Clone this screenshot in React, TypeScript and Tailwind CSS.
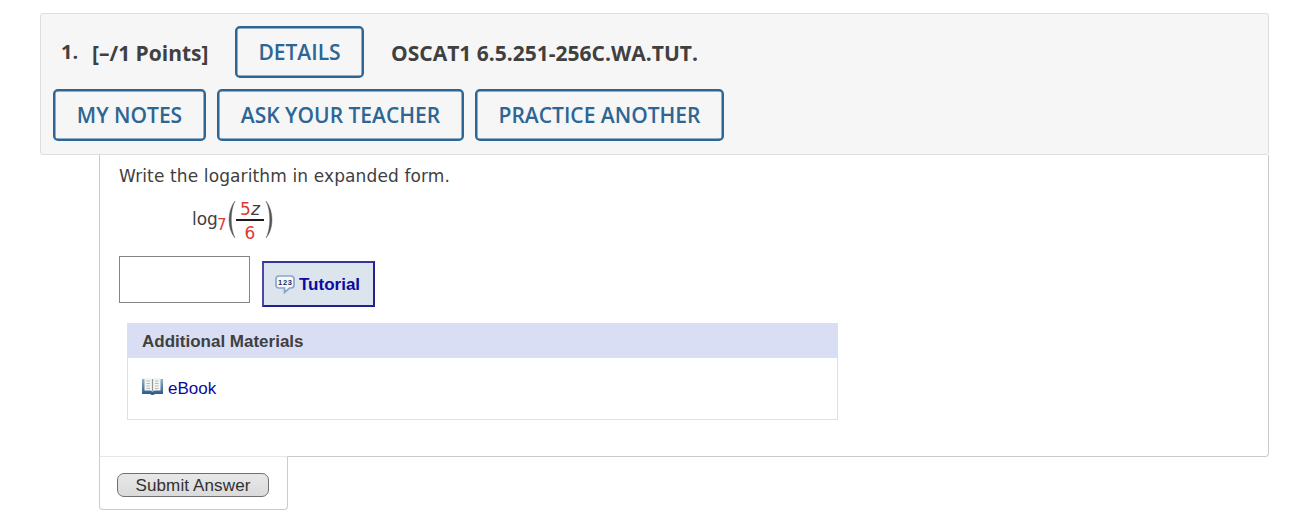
import type { ReactNode } from 'react';

export default function App() {
  return (
    <div className="h-[529px] w-[1290px] overflow-hidden bg-white pl-10 pt-[13px] text-[#404040]">
      <QuestionHeader />
      <div className="ml-[59px] h-[302px] w-[1170px] rounded-br-[4px] border border-t-0 border-[#c9c9c9] pl-[19px] pt-[9px]">
        <p className="h-6 whitespace-nowrap font-['DejaVu_Sans'] text-[17px] leading-6 tracking-[0.12px]">
          Write the logarithm in expanded form.
        </p>
        <Expression />
        <div className="flex">
          <input aria-label="Answer" className="h-[47px] w-[131px] border border-[#858585] bg-white px-2 outline-none" />
          <button className="ml-3 mt-[5px] flex h-[46px] w-[113px] items-center border-2 border-[#22228f] border-l-[#4a4aa5] border-t-[#35359b] bg-[#dce4ed] pl-[11px] font-['Liberation_Sans'] text-[17px] font-bold text-[#0b0ba0]">
            <TutorialIcon />
            <span className="ml-1 pt-0.5">Tutorial</span>
          </button>
        </div>
        <Materials />
      </div>
      <div className="-mt-px ml-[59px] h-[54px] w-[189px] rounded-b-[4px] border border-[#cbcbcb] border-t-[#e7e7e7] bg-white pl-[17px] pt-4">
        <button className="block h-6 w-[152px] rounded-[7px] border border-[#707070] bg-linear-to-b from-[#e8e8e8] to-[#dadada] pt-px font-['Liberation_Sans'] text-[17px] leading-[22px] tracking-[0.13px] text-[#303030]">
          Submit Answer
        </button>
      </div>
    </div>
  );
}

function QuestionHeader() {
  return (
    <div className="h-[142px] w-[1229px] rounded-[3px] border border-[#dedede] bg-[#f6f6f6] pl-3 pt-3 font-['Open_Sans']">
      <div className="flex h-[52px] items-center whitespace-nowrap text-[21px] font-bold">
        <span className="ml-2 w-[31px] text-[20px]">1.</span>
        <span className="w-[143px] pt-[3px]">[–/1 Points]</span>
        <HeaderButton width="w-[129px]">DETAILS</HeaderButton>
        <span className="ml-[27px] pt-[3px]">OSCAT1 6.5.251-256C.WA.TUT.</span>
      </div>
      <div className="mt-[11px] flex gap-[11px]">
        <HeaderButton width="w-[153px]">MY NOTES</HeaderButton>
        <HeaderButton width="w-[247px]">ASK YOUR TEACHER</HeaderButton>
        <HeaderButton width="w-[249px]">PRACTICE ANOTHER</HeaderButton>
      </div>
    </div>
  );
}

function HeaderButton({ width, children }: { width: string; children: ReactNode }) {
  return (
    <button
      className={`${width} h-[52px] shrink-0 whitespace-nowrap rounded-[5px] border-2 border-[#2d6594] pt-0.5 text-center text-[21px] font-semibold text-[#2d6594] shadow-[inset_0_0_0_0.5px_#2d6594]`}
    >
      {children}
    </button>
  );
}

function Expression() {
  return (
    <div className="ml-[73px] flex h-[68px] pt-3 font-['DejaVu_Sans'] text-[17px] leading-6">
      <span className="mt-[7px] w-[25px]">log</span>
      <span className="mt-[13px] w-[9px] text-[15px] text-[#dc3b30]">7</span>
      <Paren d="M9 1C1 11 1 29 9 38C4 28 4 11 9 1Z" />
      <span className="w-7 text-center">
        <span className="block h-[21px] border-b-2 border-[#1c1c1c] leading-[19px]">
          <span className="text-[#dc3b30]">5</span>
          <i>z</i>
        </span>
        <span className="block leading-6 text-[#dc3b30]">6</span>
      </span>
      <span className="ml-px">
        <Paren d="M1 1C9 11 9 29 1 38C6 28 6 11 1 1Z" />
      </span>
    </div>
  );
}

function Paren({ d }: { d: string }) {
  return (
    <svg width="10" height="40" viewBox="0 0 10 40" fill="#555" stroke="#555" strokeWidth=".4" className="shrink-0">
      <path d={d} />
    </svg>
  );
}

function Materials() {
  return (
    <div className="ml-2 mt-4 h-[97px] w-[711px] border border-[#dadff1] font-['Liberation_Sans'] text-[17px]">
      <h3 className="h-[34px] bg-[#d9def4] pl-[14px] pt-px font-bold leading-[34px]">Additional Materials</h3>
      <a href="#" className="ml-[14px] mt-[18px] flex items-center leading-6 text-[#0b0b96]">
        <BookIcon />
        <span className="ml-[5px] pt-px">eBook</span>
      </a>
    </div>
  );
}

function TutorialIcon() {
  return (
    <svg width="20" height="19" viewBox="0 0 20 19" className="shrink-0">
      <path
        d="M4 1H16Q19 1 19 4V10Q19 13 16 13H14.5L9.5 17.5V13H4Q1 13 1 10V4Q1 1 4 1Z"
        fill="#f5f8fc"
        stroke="#8aa6c6"
        strokeWidth="1.7"
      />
      <text x="10" y="9.8" textAnchor="middle" textLength="14" fontFamily="Liberation Sans" fontWeight="700" fontSize="7.5" fill="#282866">
        123
      </text>
    </svg>
  );
}

function BookIcon() {
  return (
    <svg width="21" height="19" viewBox="0 0 21 19" className="-mt-[5px] shrink-0">
      <defs>
        <linearGradient id="cover" x1="0" y1="0" x2="0" y2="1">
          <stop offset="0" stopColor="#8fb1cd" />
          <stop offset="1" stopColor="#275683" />
        </linearGradient>
      </defs>
      <path d="M0 2H21V17H13Q12 18 10.5 18T8 17H0Z" fill="url(#cover)" />
      <path d="M2.5 1H8Q10 1 10.5 2Q11 1 13 1H18.5V13.5H13Q11 13.5 10.5 15Q10 13.5 8 13.5H2.5Z" fill="#f5f5f0" />
      <path d="M10.5 2V14.5" stroke="#8b989f" strokeWidth="1.2" />
      <path d="M4.5 4H8M4.5 6.5H8M4.5 9H8M4.5 11.5H8M13 4H16.5M13 6.5H16.5M13 9H16.5M13 11.5H16.5" stroke="#b7b9b9" />
    </svg>
  );
}
